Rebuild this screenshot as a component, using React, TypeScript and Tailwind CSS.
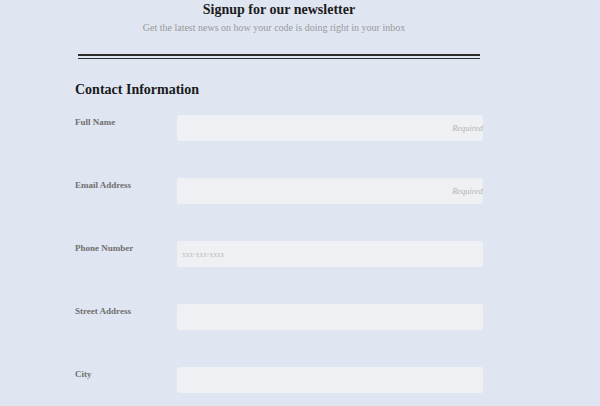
import React from 'react';

type Field = {
  label: string;
  placeholder?: string;
  required?: boolean;
};

const fields: Field[] = [
  { label: 'Full Name', placeholder: 'Required', required: true },
  { label: 'Email Address', placeholder: 'Required', required: true },
  { label: 'Phone Number', placeholder: 'xxx-xxx-xxxx' },
  { label: 'Street Address' },
  { label: 'City' },
];

export default function App() {
  return (
    <div className="h-screen overflow-hidden bg-[#dfe5f1] font-['Liberation_Serif',serif]">
      <div className="ml-[75px] w-[408px]">
        {/* Header */}
        <div className="text-center">
          <h1 className="pt-px text-[14px] font-bold leading-[17px] text-[#1c1c1c]">
            Signup for our newsletter
          </h1>
          <p className="mt-[4px] mr-[10px] text-[10px] leading-[12px] text-[#9a9a9a]">
            Get the latest news on how your code is doing right in your inbox
          </p>
        </div>

        {/* Double rule */}
        <div className="mx-[3px] mt-[20px] h-[5px] border-t-2 border-b border-[#2e2e2e]" />

        <h2 className="mt-[22px] text-[14px] font-bold leading-[17px] text-[#1a1a1a]">
          Contact Information
        </h2>

        <form className="mt-[17px] flex flex-col gap-[37px]">
          {fields.map((field) => (
            <div key={field.label} className="flex items-start">
              <label className="w-[102px] pt-px text-[9px] font-bold leading-[12px] text-[#707070]">
                {field.label}
              </label>
              <input
                type="text"
                placeholder={field.placeholder}
                className={`h-[26px] flex-1 rounded-[2px] bg-[#eef0f3] outline-none font-['Liberation_Serif',serif] ${
                  field.required
                    ? 'pr-0 text-right text-[8.5px] placeholder:italic placeholder:text-[#b3b3b3]'
                    : 'pl-[5px] text-[7.5px] placeholder:text-[#bdbdbd]'
                }`}
              />
            </div>
          ))}
        </form>
      </div>
    </div>
  );
}
